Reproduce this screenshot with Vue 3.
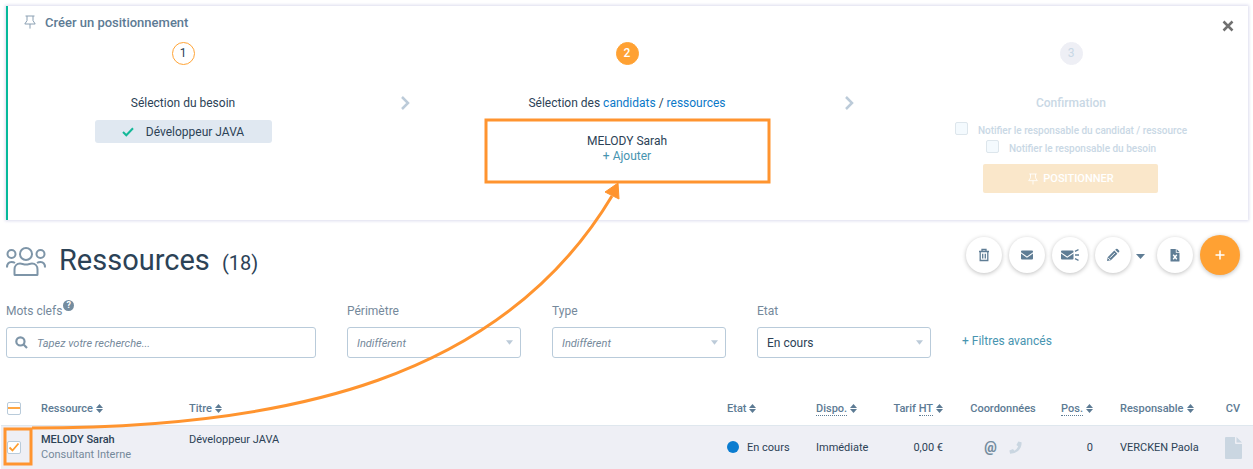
<script setup>
import { ref } from 'vue'

const keywords = ref('')
const filters = ref([
  { id: 'perimeter', label: 'Périmètre', value: 'Indifférent', options: ['Indifférent'] },
  { id: 'type', label: 'Type', value: 'Indifférent', options: ['Indifférent'] },
  { id: 'state', label: 'Etat', value: 'En cours', options: ['Indifférent', 'En cours'] }
])

const columns = [
  { key: 'name', label: 'Ressource', sort: true },
  { key: 'title', label: 'Titre', sort: true },
  { key: 'state', label: 'Etat', sort: true },
  { key: 'dispo', abbr: 'Dispo.', full: 'Disponibilité', sort: true },
  { key: 'rate', label: 'Tarif', abbr: 'HT', full: 'Hors taxes', sort: true },
  { key: 'contact', label: 'Coordonnées' },
  { key: 'pos', abbr: 'Pos.', full: 'Positionnements', sort: true },
  { key: 'owner', label: 'Responsable', sort: true },
  { key: 'cv', label: 'CV' }
]
</script>

<template>
  <div class="page">
    <section class="wizard">
      <header class="wizard-head">
        <svg class="pin" viewBox="0 0 12 14"><path d="M1.500 1h9M3 1v4.600L.8 9h10.400L9 5.600V1M6 9v4.600" /></svg>
        <h2>Créer un positionnement</h2>
        <button class="close" type="button" aria-label="Fermer">
          <svg viewBox="0 0 12 12"><path d="M1.500 1.500l9 9M10.500 1.500l-9 9" /></svg>
        </button>
      </header>
      <div class="steps">
        <div class="step">
          <span class="num">1</span>
          <p class="step-title">Sélection du besoin</p>
          <div class="need">
            <svg viewBox="0 0 12 10"><path d="M1 5l3.300 3.300L11 1.300" /></svg>
            <span>Développeur JAVA</span>
          </div>
        </div>
        <svg class="chevron" viewBox="0 0 10 14"><path d="M2 1l6 6-6 6" /></svg>
        <div class="step">
          <span class="num current">2</span>
          <p class="step-title">Sélection des <a href="#candidats">candidats</a> / <a href="#ressources">ressources</a></p>
          <div class="picked">
            <span>MELODY Sarah</span>
            <a class="add" href="#ajouter">+ Ajouter</a>
          </div>
        </div>
        <svg class="chevron" viewBox="0 0 10 14"><path d="M2 1l6 6-6 6" /></svg>
        <div class="step disabled">
          <span class="num">3</span>
          <p class="step-title">Confirmation</p>
          <div class="confirm">
            <label><input type="checkbox" disabled><span>Notifier le responsable du candidat / ressource</span></label>
            <label><input type="checkbox" disabled><span>Notifier le responsable du besoin</span></label>
            <button class="submit" type="button" disabled>
              <svg class="pin" viewBox="0 0 12 14"><path d="M1.500 1h9M3 1v4.600L.8 9h10.400L9 5.600V1M6 9v4.600" /></svg>
              POSITIONNER
            </button>
          </div>
        </div>
      </div>
    </section>

    <header class="heading">
      <svg class="people" viewBox="0 0 40 29">
        <circle cx="20" cy="7" r="6" /><circle cx="5.500" cy="7" r="4" /><circle cx="34.500" cy="7" r="4" />
        <path d="M8.500 27.500v-5c0-3.600 2.300-6 5.500-6 2 0 3.500 1 6 1s4-1 6-1c3.200 0 5.500 2.400 5.500 6v5q0 .5-.5.5H9q-.5 0-.5-.5zM1 20.500c0-3.500 1.500-5.500 4.500-5.500 1.500 0 2.500.3 3.500 1M39 20.500c0-3.500-1.500-5.500-4.500-5.500-1.500 0-2.500.3-3.500 1" />
      </svg>
      <h1>Ressources <small>(18)</small></h1>
      <div class="actions">
        <button class="round" type="button" aria-label="Supprimer">
          <svg class="line" viewBox="0 0 14 14"><path d="M2 3.500h10M5 3V1.500h4V3M3.200 3.800v8.700h7.600V3.800M5.700 5.800v4.700M8.300 5.800v4.700" /></svg>
        </button>
        <button class="round" type="button" aria-label="Envoyer un e-mail">
          <svg viewBox="0 0 14 14"><path d="M1 4.200V3.500Q1 2.500 2 2.500h10q1 0 1 1v.7L7 8.400zM1 5.600l6 4.200 6-4.200v4.900q0 1-1 1H2q-1 0-1-1z" /></svg>
        </button>
        <button class="round" type="button" aria-label="Envoi groupé">
          <svg class="wide" viewBox="0 0 20 14"><path d="M1 4.200V3.500Q1 2.500 2 2.500h10.500q1 0 1 1v.7L7.200 8.400zM1 5.600l6.200 4.200 6.300-4.200v4.900q0 1-1 1H2q-1 0-1-1z" /><path class="rays" d="M15 3.300l3.500-1.600M15 7h4M15 10.700l3.500 1.600" /></svg>
        </button>
        <button class="round" type="button" aria-label="Modifier">
          <svg viewBox="0 0 14 14"><path d="M1 13l.7-3.800 6.600-6.600 3.100 3.100-6.600 6.600zM9.200 1.800l.8-.8q.8-.7 1.600 0L13 2.400q.7.800 0 1.600l-.8.800z" /><path class="cut" d="M4 9.800l4.800-4.800M2 9.800l2.200 2.200" /></svg>
        </button>
        <button class="more" type="button" aria-label="Plus d'actions"><svg viewBox="0 0 9 5"><path d="M0 0h9L4.500 5z" /></svg></button>
        <button class="round" type="button" aria-label="Exporter">
          <svg viewBox="0 0 14 14"><path d="M2.500 1h5.300v3.800h3.700V13q0 .5-.5.5H3q-.5 0-.5-.5zM8.600 1l2.900 3H8.600z" /><path class="cross" d="M5.200 6.700l3.600 4.600M8.800 6.700l-3.600 4.600" /></svg>
        </button>
        <button class="round create" type="button" aria-label="Ajouter">
          <svg viewBox="0 0 10 10"><path d="M5 .5v9M.5 5h9" /></svg>
        </button>
      </div>
    </header>

    <form class="filters" @submit.prevent>
      <div class="field search">
        <label for="keywords">Mots clefs<span class="help">?</span></label>
        <div class="control">
          <svg class="loupe" viewBox="0 0 12 12"><circle cx="5" cy="5" r="3.800" /><path d="M7.900 7.900l3.200 3.200" /></svg>
          <input id="keywords" v-model="keywords" type="text" placeholder="Tapez votre recherche...">
        </div>
      </div>
      <div v-for="f in filters" :key="f.id" class="field">
        <label :for="f.id">{{ f.label }}</label>
        <div class="control">
          <select :id="f.id" v-model="f.value" :class="{ any: f.value === 'Indifférent' }">
            <option v-for="o in f.options" :key="o">{{ o }}</option>
          </select>
          <svg class="arrow" viewBox="0 0 8 5"><path d="M0 0h8L4 5z" /></svg>
        </div>
      </div>
      <a class="advanced" href="#filtres">+ Filtres avancés</a>
    </form>

    <table>
      <colgroup>
        <col class="c-check">
        <col v-for="c in columns" :key="c.key" :class="'c-' + c.key">
      </colgroup>
      <thead>
        <tr>
          <th>
            <span class="tick"><input type="checkbox" aria-label="Tout sélectionner"><svg viewBox="0 0 12 12"><path d="M0 6h12" /></svg></span>
          </th>
          <th v-for="c in columns" :key="c.key" :class="c.key">
            <component :is="c.sort ? 'button' : 'span'" class="sort">
              <span>{{ c.label }}<template v-if="c.label && c.abbr">&nbsp;</template><abbr v-if="c.abbr" :title="c.full">{{ c.abbr }}</abbr></span>
              <svg v-if="c.sort" viewBox="0 0 7 9"><path d="M0 4l3.500-4L7 4zM0 5h7L3.500 9z" /></svg>
            </component>
          </th>
        </tr>
      </thead>
      <tbody>
        <tr>
          <td>
            <span class="tick"><input type="checkbox" checked aria-label="Sélectionner MELODY Sarah"><svg viewBox="0 0 12 12"><path d="M1.500 6.500l3 3 6-7" /></svg></span>
          </td>
          <td class="top"><strong>MELODY Sarah</strong><div class="kind">Consultant Interne</div></td>
          <td class="top">Développeur JAVA</td>
          <td class="state"><span class="dot"></span>En cours</td>
          <td>Immédiate</td>
          <td class="rate">0,00 €</td>
          <td class="contact">
            <div class="contacts">
              <a href="#email" aria-label="E-mail">@</a>
              <svg viewBox="0 0 14 14"><path d="M10 .5l3.500.8q.5 5.500-3.500 9.200-3.800 3.300-8.800 3.200l-.8-3.500 3.900-1.700 1.600 1.900Q8.600 8.600 9.900 6L8 4.400z" /></svg>
            </div>
          </td>
          <td class="pos">0</td>
          <td class="owner">VERCKEN Paola</td>
          <td class="cv"><svg viewBox="0 0 17 22"><path d="M1 0h9v6q0 1 1 1h6v14q0 1-1 1H1q-1 0-1-1V1q0-1 1-1zM11.500 0L17 5.500h-5.500z" /></svg></td>
        </tr>
      </tbody>
    </table>

    <svg class="guide" width="780" height="469" viewBox="0 0 780 469" aria-hidden="true">
      <rect x="486" y="120" width="283" height="62" />
      <rect x="5" y="429" width="26" height="35" />
      <path d="M32 428C290 428 503 378 612 196" />
      <path class="head" d="M618 183l-13 9 14 7z" />
    </svg>
  </div>
</template>

<style>
body {
  margin: 0;
  background: #fff;
}
</style>

<style scoped>
* {
  box-sizing: border-box;
}
.page {
  position: relative;
  font: 12px/15px Roboto, "Liberation Sans", sans-serif;
  color: #2c4256;
  overflow: hidden;
}
h1, h2, p {
  margin: 0;
}
a {
  color: #0a78c8;
  text-decoration: none;
}
button {
  font: inherit;
  color: inherit;
  padding: 0;
  border: 0;
  background: none;
}
svg {
  display: block;
  flex: none;
  fill: none;
  stroke: none;
}
.wizard {
  margin: 6px 5px 0 6px;
  min-height: 214px;
  border-left: 2px solid #05b99a;
  box-shadow: 0 0 3px 1px #dcdcee;
}
.wizard-head {
  display: flex;
  align-items: center;
  height: 32px;
  padding: 0 14px 0 16px;
}
.pin {
  width: 12px;
  height: 14px;
  stroke: #8ba0b3;
}
h2 {
  flex: 1;
  margin-left: 9px;
  font-size: 13px;
  font-weight: 500;
  color: #5d7b94;
}
.close {
  padding-top: 8px;
}
.close svg {
  width: 12px;
  height: 12px;
  stroke: #707070;
  stroke-width: 2.500;
}
.steps {
  display: grid;
  grid-template-columns: 1fr 94px 1fr 94px 1fr;
  padding: 4px 2px 0 0;
}
.step {
  display: flex;
  flex-direction: column;
  align-items: center;
}
.num {
  width: 23px;
  height: 23px;
  border: 1px solid #ffa436;
  border-radius: 50%;
  line-height: 21px;
  text-align: center;
}
.num.current {
  background: #ffa133;
  color: #fff;
  font-weight: 500;
}
.step-title {
  margin-top: 31px;
}
.need {
  display: flex;
  align-items: center;
  justify-content: center;
  gap: 12px;
  width: 177px;
  height: 23px;
  margin-top: 9px;
  padding-top: 1px;
  border-radius: 3px;
  background: #e0e8f1;
}
.need svg {
  width: 12px;
  height: 10px;
  stroke: #13b898;
  stroke-width: 2;
}
.chevron {
  width: 10px;
  height: 14px;
  margin-top: 54px;
  justify-self: center;
  stroke: #bccbd9;
  stroke-width: 2.500;
}
.picked {
  display: flex;
  flex-direction: column;
  align-items: center;
  margin-top: 23px;
}
.add, .advanced {
  color: #4794b0;
}
.disabled {
  color: #c9d8e5;
}
.disabled .num {
  border-color: #eeeff5;
  background: #eeeff5;
}
.disabled .step-title {
  font-weight: 500;
}
.confirm {
  display: flex;
  flex-direction: column;
  align-items: center;
  margin-top: 9px;
  font-size: 10px;
  font-weight: 500;
}
.confirm label {
  display: flex;
  gap: 10px;
  height: 18px;
}
.confirm label span {
  padding-top: 3px;
}
input[type="checkbox"] {
  appearance: none;
  display: block;
  width: 13px;
  height: 13px;
  margin: 2px 0 0;
  border: 1px solid #dde6ec;
  border-radius: 2px;
  background: #f4fafe;
}
.submit {
  display: flex;
  align-items: center;
  justify-content: center;
  gap: 5px;
  width: 175px;
  height: 29px;
  margin-top: 8px;
  border-radius: 2px;
  background: #fae7ca;
  color: #fff;
  font-size: 11px;
  font-weight: 500;
}
.submit .pin {
  width: 10px;
  height: 12px;
  stroke: #fff;
}
.heading {
  display: flex;
  align-items: center;
  height: 40px;
  margin: 15px 13px 0 6px;
}
.people {
  width: 40px;
  height: 29px;
  margin-top: 12px;
  stroke: #7e95a8;
  stroke-width: 2;
}
h1 {
  flex: 1;
  margin: 12px 0 0 13px;
  font-size: 29px;
  line-height: 36px;
  font-weight: 400;
}
h1 small {
  margin-left: 5px;
  font-size: 20px;
}
.actions {
  display: flex;
  align-items: center;
  gap: 7px;
}
.round {
  display: flex;
  align-items: center;
  justify-content: center;
  width: 36px;
  height: 36px;
  border-radius: 50%;
  background: #fff;
  box-shadow: 0 1px 4px #00000040;
}
.round svg {
  width: 14px;
  height: 14px;
  fill: #5f7d95;
}
.round .wide {
  width: 20px;
}
.round .line {
  fill: none;
  stroke: #5f7d95;
  stroke-width: 1.300;
}
.round .rays {
  stroke: #5f7d95;
  stroke-width: 1.300;
}
.cut, .cross {
  stroke: #fff;
  stroke-width: 1;
}
.cross {
  stroke-width: 1.400;
}
.more svg {
  width: 9px;
  height: 5px;
  margin-top: 3px;
  fill: #5f7d95;
}
.more {
  margin: 0 5px 0 -2px;
}
.round.create {
  width: 40px;
  height: 40px;
  background: #ffa133;
}
.create svg {
  width: 10px;
  height: 10px;
  stroke: #fff;
  stroke-width: 1.500;
}
.filters {
  display: flex;
  gap: 31px;
  margin: 29px 6px 0;
}
.field {
  flex: 0 1 174px;
}
.search {
  flex-basis: 310px;
}
.field label {
  display: flex;
  height: 23px;
  color: #75899b;
}
.help {
  width: 11px;
  height: 11px;
  margin-left: 1px;
  margin-top: -4px;
  border-radius: 50%;
  background: #748c9f;
  color: #fff;
  font-size: 9px;
  font-weight: 700;
  line-height: 11px;
  text-align: center;
}
.control {
  position: relative;
}
.control input, .control select {
  appearance: none;
  display: block;
  width: 100%;
  height: 31px;
  padding: 1px 9px 0;
  border: 1px solid #b9cbda;
  border-radius: 3px;
  background: #fff;
  font: inherit;
  color: #2c4256;
}
.control input {
  padding-left: 30px;
  font-size: 11px;
  font-style: italic;
}
.control input::placeholder {
  color: #75899b;
}
.control select.any {
  font-size: 11px;
  font-style: italic;
  color: #75899b;
}
.loupe {
  position: absolute;
  left: 9px;
  top: 9px;
  width: 13px;
  height: 13px;
  stroke: #7e95a8;
  stroke-width: 2;
}
.arrow {
  position: absolute;
  right: 8px;
  top: 13px;
  width: 7px;
  height: 5px;
  fill: #bccbd9;
}
.advanced {
  margin-top: 30px;
}
table {
  width: calc(100% - 1px);
  margin: 32px 0 0 1px;
  border-collapse: separate;
  border-spacing: 0;
  table-layout: fixed;
  font-size: 11px;
}
.c-check { width: 40px; }
.c-name { width: 148px; }
.c-state { width: 89px; }
.c-dispo { width: 69px; }
.c-rate { width: 58px; }
.c-contact { width: 120px; }
.c-pos { width: 30px; }
.c-owner { width: 120px; }
.c-cv { width: 40px; }
th, td {
  padding: 0;
  text-align: left;
  white-space: nowrap;
}
th {
  height: 35px;
  padding-top: 2px;
  font-weight: 500;
  color: #5d7b94;
}
td {
  height: 44px;
  border-top: 1px solid #dfe7ee;
  background: #eeeff5;
}
.sort {
  display: inline-flex;
  align-items: center;
  gap: 3px;
}
.sort svg {
  width: 7px;
  height: 9px;
  fill: #5d7b94;
}
abbr {
  text-decoration: none;
  border-bottom: 1px dotted #5d7b94;
}
.top {
  padding-top: 6px;
  vertical-align: top;
}
strong {
  font-weight: 500;
}
.kind {
  color: #75899b;
}
.rate, .pos {
  text-align: right;
}
th.rate, th.pos {
  direction: rtl;
}
th.rate .sort, th.pos .sort {
  direction: ltr;
}
.contact, .cv {
  text-align: center;
}
.owner {
  padding-left: 27px;
}
.dot {
  display: inline-block;
  width: 12px;
  height: 12px;
  margin-right: 8px;
  border-radius: 50%;
  background: #0a7cd0;
  vertical-align: -2px;
}
.contacts {
  display: flex;
  align-items: center;
  justify-content: center;
  gap: 12px;
}
.contacts a {
  color: #748c9f;
  font-size: 14px;
  font-weight: 900;
}
.contacts svg {
  width: 13px;
  height: 13px;
  fill: #cad6e1;
}
.cv svg {
  width: 17px;
  height: 22px;
  margin: 0 auto;
  fill: #cad6e1;
}
.tick {
  position: relative;
  display: block;
  width: 14px;
  height: 13px;
  margin-left: 6px;
}
.tick input[type="checkbox"] {
  width: 14px;
  margin: 0;
  border-color: #b9cbda;
  background: #fff;
}
.tick svg {
  position: absolute;
  left: 1px;
  top: 0;
  width: 12px;
  height: 12px;
  stroke: #ff9d2f;
  stroke-width: 1.800;
  pointer-events: none;
}
.guide {
  position: absolute;
  left: 0;
  top: 0;
  stroke: #ff942f;
  stroke-width: 3;
  pointer-events: none;
}
.guide .head {
  fill: #ff942f;
  stroke-width: 1;
}
</style>
